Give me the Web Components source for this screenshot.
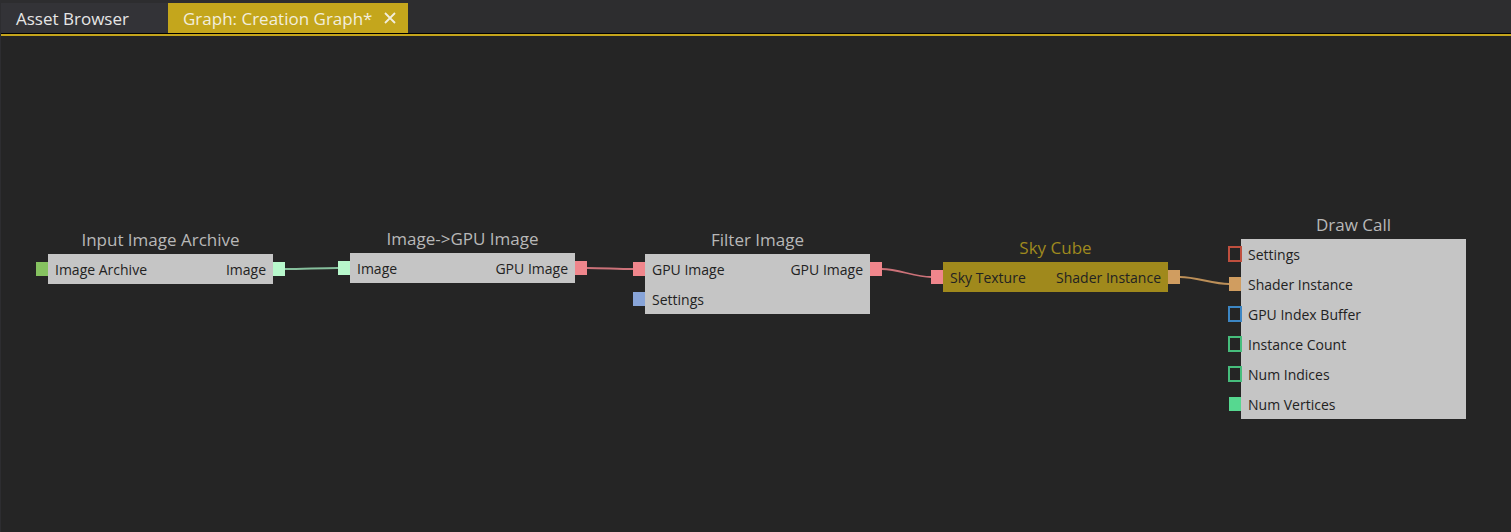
<!DOCTYPE html>
<html lang="en">
<head>
<meta charset="utf-8">
<title>Creation Graph</title>
<style>
  html, body { height: 100%; margin: 0; }
  body { background: #252525; font-family: "Open Sans", "Segoe UI", sans-serif; }
</style>
</head>
<body>
<editor-window>
  <tab-bar slot="tabs">
    <editor-tab>Asset Browser</editor-tab>
    <editor-tab active closable>Graph: Creation Graph*</editor-tab>
  </tab-bar>
  <graph-canvas>
    <graph-node id="input" x="47" y="218" label="Input Image Archive">
      <node-port slot="in" color="#86c260">Image Archive</node-port>
      <node-port slot="out" name="image" side="out" color="#b8f8cc">Image</node-port>
    </graph-node>
    <graph-node id="gpu" x="349" y="217" label="Image-&gt;GPU Image">
      <node-port slot="in" name="image" color="#b8f8cc">Image</node-port>
      <node-port slot="out" name="gpu" side="out" color="#f0868c">GPU Image</node-port>
    </graph-node>
    <graph-node id="filter" x="644" y="218" label="Filter Image">
      <node-port slot="in" name="gpu" color="#f0868c">GPU Image</node-port>
      <node-port slot="in" color="#88a4d8">Settings</node-port>
      <node-port slot="out" name="out" side="out" color="#f0868c">GPU Image</node-port>
    </graph-node>
    <graph-node id="sky" x="942" y="226" label="Sky Cube" selected>
      <node-port slot="in" name="texture" color="#f0868c">Sky Texture</node-port>
      <node-port slot="out" name="shader" side="out" color="#d09d60">Shader Instance</node-port>
    </graph-node>
    <graph-node id="draw" x="1240" y="203" label="Draw Call">
      <node-port slot="in" empty color="#bf4f3e">Settings</node-port>
      <node-port slot="in" name="shader" color="#d09d60">Shader Instance</node-port>
      <node-port slot="in" empty color="#3c86c4">GPU Index Buffer</node-port>
      <node-port slot="in" empty color="#46bd7c">Instance Count</node-port>
      <node-port slot="in" empty color="#46bd7c">Num Indices</node-port>
      <node-port slot="in" color="#56d890">Num Vertices</node-port>
    </graph-node>
    <graph-wire from="input.image" to="gpu.image" color="#86bf9c"></graph-wire>
    <graph-wire from="gpu.gpu" to="filter.gpu" color="#cc7279"></graph-wire>
    <graph-wire from="filter.out" to="sky.texture" color="#cc7279"></graph-wire>
    <graph-wire from="sky.shader" to="draw.shader" color="#bc8f58"></graph-wire>
  </graph-canvas>
</editor-window>

<script>
class EditorWindow extends HTMLElement {
  constructor() {
    super();
    this.attachShadow({ mode: 'open' }).innerHTML = `
      <style>
        :host { display: flex; flex-direction: column; height: 100%; box-sizing: border-box; border-left: 1px solid #2d2d30; }
        main { flex: 1; display: flex; min-height: 0; }
        ::slotted(graph-canvas) { flex: 1; }
      </style>
      <slot name="tabs"></slot>
      <main><slot></slot></main>`;
  }
}

class TabBar extends HTMLElement {
  constructor() {
    super();
    this.attachShadow({ mode: 'open' }).innerHTML = `
      <style>
        :host { display: block; padding-top: 3px; background: #2d2d2f; border-bottom: 2px solid #c4a41c; }
        nav { display: flex; border-bottom: 1px solid #000; }
      </style>
      <nav aria-label="Open documents"><slot></slot></nav>`;
  }
}

class EditorTab extends HTMLElement {
  constructor() {
    super();
    this.attachShadow({ mode: 'open' }).innerHTML = `
      <style>
        :host { display: flex; box-sizing: border-box; height: 30px; min-width: 167px; background: #333337; color: #e6e6e6; }
        :host([active]) { background: #c4a61c; color: #f2eedd; }
        button { border: 0; background: none; color: inherit; font: 17px/30px "Open Sans", "Segoe UI", sans-serif; cursor: pointer; }
        .label { flex: 1; padding: 1px 0 0 15px; text-align: left; white-space: nowrap; }
        .close { display: none; padding: 0 12px; align-items: center; }
        :host([closable]) .close { display: flex; }
      </style>
      <button class="label"><slot></slot></button>
      <button class="close" aria-label="Close tab">
        <svg width="12" height="12" viewBox="0 0 12 12" fill="none" stroke="currentColor" stroke-width="1.8"><path d="M1 1l10 10M11 1L1 11"/></svg>
      </button>`;
  }
}

class NodePort extends HTMLElement {
  constructor() {
    super();
    this.attachShadow({ mode: 'open' }).innerHTML = `
      <style>
        :host { display: block; position: relative; height: 30px; padding: 0 7px; font-size: 14px; line-height: 32px; white-space: nowrap; }
        i { position: absolute; box-sizing: border-box; top: 8px; left: -12px; width: 12px; height: 14px; background: var(--port); }
        :host([side="out"]) i { left: auto; right: -12px; }
        :host([empty]) i { top: 7px; left: -13px; width: 14px; height: 16px; background: #252525; border: 2px solid var(--port); }
      </style>
      <i></i><slot></slot>`;
  }
  connectedCallback() { this.style.setProperty('--port', this.getAttribute('color')); }
  get pin() { return this.shadowRoot.querySelector('i').getBoundingClientRect(); }
}

class GraphNode extends HTMLElement {
  constructor() {
    super();
    this.attachShadow({ mode: 'open' }).innerHTML = `
      <style>
        :host { display: block; position: absolute; width: 225px; color: #222; }
        h2 { position: absolute; bottom: 100%; left: 0; right: 0; margin: 0; font-size: 17px; line-height: 28px; font-weight: 400; text-align: center; color: #b8b8b8; white-space: nowrap; }
        .body { display: flex; justify-content: space-between; background: #c5c5c5; }
        :host([selected]) h2 { color: #9f891e; }
        :host([selected]) .body { background: #a0891c; }
      </style>
      <h2></h2>
      <div class="body">
        <div><slot name="in"></slot></div>
        <div><slot name="out"></slot></div>
      </div>`;
  }
  connectedCallback() {
    this.style.left = this.getAttribute('x') + 'px';
    this.style.top = this.getAttribute('y') + 'px';
    this.shadowRoot.querySelector('h2').textContent = this.getAttribute('label');
  }
}

class GraphWire extends HTMLElement {
  constructor() {
    super();
    this.attachShadow({ mode: 'open' }).innerHTML = `
      <style>
        :host { display: block; position: absolute; inset: 0; pointer-events: none; }
        svg { display: block; width: 100%; height: 100%; }
      </style>
      <svg aria-hidden="true"><path fill="none" stroke-width="1.8"/></svg>`;
  }
  connectedCallback() {
    const find = key => {
      const [node, port] = this.getAttribute(key).split('.');
      return document.querySelector(`#${node} node-port[slot="${key === 'from' ? 'out' : 'in'}"][name="${port}"]`).pin;
    };
    const origin = this.parentElement.getBoundingClientRect();
    const a = find('from'), b = find('to');
    const x1 = a.right - origin.left, y1 = a.top + a.height / 2 - origin.top;
    const x2 = b.left - origin.left, y2 = b.top + b.height / 2 - origin.top;
    const reach = (x2 - x1) / 3;
    const path = this.shadowRoot.querySelector('path');
    path.setAttribute('d', `M${x1} ${y1}C${x1 + reach} ${y1} ${x2 - reach} ${y2} ${x2} ${y2}`);
    path.setAttribute('stroke', this.getAttribute('color'));
  }
}

class GraphCanvas extends HTMLElement {
  constructor() {
    super();
    this.attachShadow({ mode: 'open' }).innerHTML = `
      <style>:host { display: block; position: relative; overflow: hidden; background: #252525; }</style>
      <slot></slot>`;
  }
}

customElements.define('editor-window', EditorWindow);
customElements.define('tab-bar', TabBar);
customElements.define('editor-tab', EditorTab);
customElements.define('graph-canvas', GraphCanvas);
customElements.define('node-port', NodePort);
customElements.define('graph-node', GraphNode);
customElements.define('graph-wire', GraphWire);
</script>
</body>
</html>
